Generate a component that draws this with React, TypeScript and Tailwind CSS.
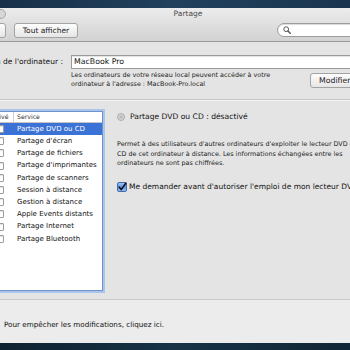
import React from 'react';

const services = [
  'Partage DVD ou CD',
  "Partage d'écran",
  'Partage de fichiers',
  "Partage d'imprimantes",
  'Partage de scanners',
  'Session à distance',
  'Gestion à distance',
  'Apple Events distants',
  'Partage Internet',
  'Partage Bluetooth',
];

function Box() {
  return <div className="w-[8px] h-[8px] bg-white border border-[#9d9d9d] rounded-[1px] shadow-[inset_0_1px_1px_rgba(0,0,0,0.12)]" />;
}

function CheckedBox() {
  return (
    <svg width="10" height="10" viewBox="0 0 10 10">
      <defs>
        <linearGradient id="cb" x1="0" y1="0" x2="0" y2="1">
          <stop offset="0" stopColor="#a9cdf5" />
          <stop offset="0.5" stopColor="#5a97e6" />
          <stop offset="1" stopColor="#9cc6f5" />
        </linearGradient>
      </defs>
      <rect x="0.5" y="0.5" width="9" height="9" rx="1.5" fill="url(#cb)" stroke="#3f6bad" />
      <path d="M2.3 5.2 L4.2 7.6 L8.8 1.2" fill="none" stroke="#111" strokeWidth="1.6" strokeLinecap="round" strokeLinejoin="round" />
    </svg>
  );
}

export default function App() {
  return (
    <div className="w-[350px] h-[350px] overflow-hidden bg-[#14283a] font-['DejaVu_Sans',sans-serif] text-[#111]">
      <div className="h-[8px] bg-gradient-to-r from-[#183049] via-[#21415c] to-[#1a3550]" />
      <div className="-ml-[60px] w-[470px] h-[335px] flex flex-col bg-[#e4e4e4]">
        {/* title bar + toolbar */}
        <div className="h-[34px] bg-gradient-to-b from-[#ececec] to-[#d2d2d2] border-b border-[#9a9a9a] flex flex-col">
          <div className="h-[12px] flex items-center relative">
            <div className="flex gap-[10px] pl-[16px] pt-[1px]">
              <div className="w-[10px] h-[10px] rounded-full bg-[#cfcfcf] border border-[#a4a4a4]" />
              <div className="w-[10px] h-[10px] rounded-full bg-[#cfcfcf] border border-[#a4a4a4]" />
              <div className="w-[10px] h-[10px] rounded-full bg-[#d6d6d6] border border-[#a8a8a8]" />
            </div>
            <div className="flex-1 flex justify-center pr-[138px]">
              <span className="text-[7.5px] leading-[10px] text-[#4a4a4a] pl-[98px]">Partage</span>
            </div>
          </div>
          <div className="h-[22px] flex items-center pl-[34px]">
            <div className="flex h-[15px] w-[32px] border border-[#a3a3a3] rounded-[3px] bg-gradient-to-b from-[#fdfdfd] to-[#e6e6e6] overflow-hidden">
              <div className="w-[15px] border-r border-[#b0b0b0]" />
              <div className="flex-1 flex items-center justify-center">
                <div className="w-0 h-0 border-y-[3px] border-y-transparent border-l-[4px] border-l-[#8a8a8a]" />
              </div>
            </div>
            <div className="ml-[8px] h-[15px] w-[64px] border border-[#a3a3a3] rounded-[3px] bg-gradient-to-b from-[#fdfdfd] to-[#e6e6e6] flex items-center justify-center text-[7.5px] text-[#222]">
              Tout afficher
            </div>
            <div className="ml-auto mr-[23px] h-[14px] w-[110px] bg-white border border-[#9c9c9c] rounded-full flex items-center pl-[5px] shadow-[inset_0_1px_1px_rgba(0,0,0,0.15)]">
              <svg width="8" height="8" viewBox="0 0 8 8">
                <circle cx="3.2" cy="3.2" r="2.4" fill="none" stroke="#555" strokeWidth="1" />
                <path d="M5 5 L7.4 7.4" stroke="#555" strokeWidth="1.4" strokeLinecap="round" />
              </svg>
            </div>
          </div>
        </div>

        {/* computer name */}
        <div className="h-[57px] pt-[13px] flex flex-col">
          <div className="flex items-center h-[14px]">
            <div className="w-[124px] text-right text-[7.5px] pr-[1px]">Nom de l'ordinateur :</div>
            <div className="ml-[7px] mr-[20px] flex-1 h-[14px] bg-white border border-[#9a9a9a] shadow-[inset_0_1px_1px_rgba(0,0,0,0.12)] flex items-center pl-[2px] text-[7.8px]">
              MacBook Pro
            </div>
          </div>
          <div className="flex pl-[131px] mt-[2px] pr-[40px]">
            <div className="text-[6.4px] leading-[9px] text-[#222]">
              <div>Les ordinateurs de votre réseau local peuvent accéder à votre</div>
              <div>ordinateur à l'adresse : MacBook-Pro.local</div>
            </div>
            <div className="ml-auto mt-[2px] h-[15px] w-[60px] border border-[#a3a3a3] rounded-[3px] bg-gradient-to-b from-[#fdfdfd] to-[#e6e6e6] flex items-center pl-[8px] text-[7.8px] text-[#222]">
              Modifier…
            </div>
          </div>
        </div>
        <div className="h-px bg-[#c6c6c6]" />
        <div className="h-px bg-[#f2f2f2]" />

        {/* services */}
        <div className="flex-1 flex pt-[10px] pl-[44px]">
          <div className="w-[119px] h-[180px] bg-white border border-[#6f93c8] shadow-[0_0_0_2px_#a9c5ee] flex flex-col">
            <div className="h-[11px] flex border-b border-[#c4c4c4] text-[6.2px] text-[#333]">
              <div className="w-[29px] border-r border-[#cfcfcf] flex items-center justify-center">Activé</div>
              <div className="pl-[3px] flex items-center">Service</div>
            </div>
            {services.map((s, i) => (
              <div key={s} className={`h-[12.2px] flex items-center text-[7px] ${i === 0 ? 'bg-[#3a72d6] text-white' : ''}`}>
                <div className="w-[29px] flex justify-center">
                  <Box />
                </div>
                <div className="pl-[3px] whitespace-nowrap">{s}</div>
              </div>
            ))}
          </div>

          <div className="ml-[14px] flex flex-col">
            <div className="h-[12px] flex items-center">
              <svg width="8" height="8" viewBox="0 0 8 8">
                <circle cx="4" cy="4" r="3.5" fill="#d4d4d4" stroke="#a2a2a2" strokeWidth="0.8" />
                <circle cx="4" cy="4" r="1.8" fill="#bdbdbd" />
              </svg>
              <span className="ml-[5px] text-[7.6px] whitespace-nowrap">Partage DVD ou CD : désactivé</span>
            </div>
            <div className="mt-[17px] text-[6.4px] leading-[9.5px] text-[#222] whitespace-nowrap">
              <div>Permet à des utilisateurs d'autres ordinateurs d'exploiter le lecteur DVD ou</div>
              <div>CD de cet ordinateur à distance. Les informations échangées entre les</div>
              <div>ordinateurs ne sont pas chiffrées.</div>
            </div>
            <div className="mt-[12px] h-[12px] flex items-center">
              <CheckedBox />
              <span className="ml-[2px] text-[7.5px] whitespace-nowrap">Me demander avant d'autoriser l'emploi de mon lecteur DVD</span>
            </div>
          </div>
        </div>

        {/* bottom bar */}
        <div className="h-px bg-[#c9c9c9]" />
        <div className="h-[43px] bg-[#ececec] pl-[64px] pt-[20px]">
          <div className="text-[7.2px] leading-[10px]">Pour empêcher les modifications, cliquez ici.</div>
        </div>
      </div>
      <div className="h-[7px] bg-gradient-to-r from-[#0f2231] via-[#173246] to-[#112636]" />
    </div>
  );
}
